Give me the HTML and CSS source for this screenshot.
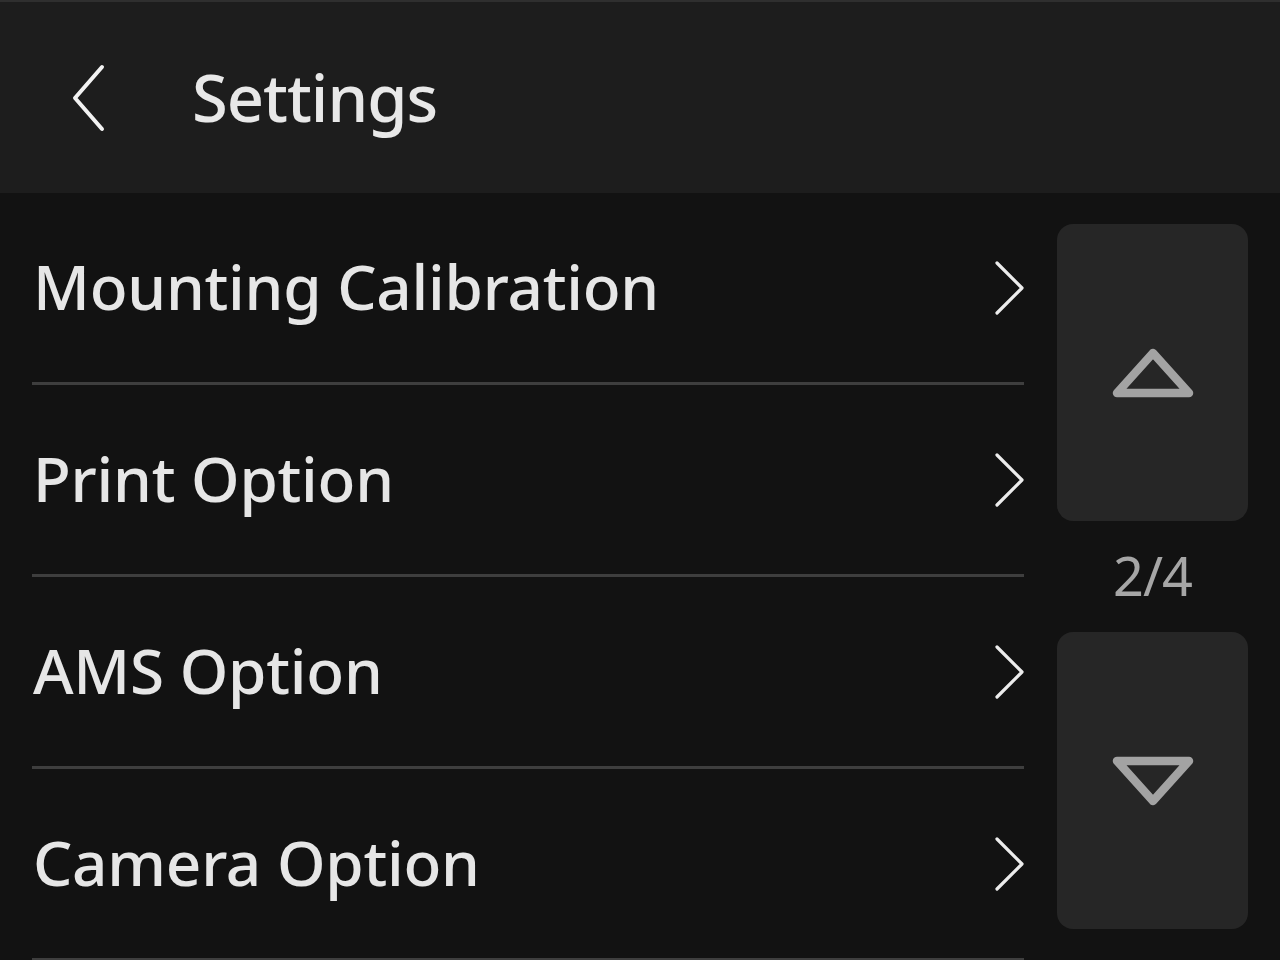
FILE: index.html
```html
<!DOCTYPE html>
<html lang="en">
<head>
<meta charset="utf-8">
<title>Settings</title>
<link rel="stylesheet" href="styles.css">
</head>
<body>
<div class="screen">
  <header class="header">
    <button class="back" aria-label="Back">
      <svg width="36" height="68" viewBox="0 0 36 68"><path d="M32 3 L5 34 L32 65" fill="none" stroke="#f2f2f2" stroke-width="4" stroke-linecap="round" stroke-linejoin="round"/></svg>
    </button>
    <h1 class="title">Settings</h1>
  </header>
  <main class="main">
    <ul class="list">
      <li class="row"><span class="label">Mounting Calibration</span><svg class="chev" width="32" height="56" viewBox="0 0 32 56"><path d="M3 3 L28 28 L3 53" fill="none" stroke="#ececec" stroke-width="3.2" stroke-linecap="round" stroke-linejoin="round"/></svg></li>
      <li class="row"><span class="label">Print Option</span><svg class="chev" width="32" height="56" viewBox="0 0 32 56"><path d="M3 3 L28 28 L3 53" fill="none" stroke="#ececec" stroke-width="3.2" stroke-linecap="round" stroke-linejoin="round"/></svg></li>
      <li class="row"><span class="label">AMS Option</span><svg class="chev" width="32" height="56" viewBox="0 0 32 56"><path d="M3 3 L28 28 L3 53" fill="none" stroke="#ececec" stroke-width="3.2" stroke-linecap="round" stroke-linejoin="round"/></svg></li>
      <li class="row"><span class="label">Camera Option</span><svg class="chev" width="32" height="56" viewBox="0 0 32 56"><path d="M3 3 L28 28 L3 53" fill="none" stroke="#ececec" stroke-width="3.2" stroke-linecap="round" stroke-linejoin="round"/></svg></li>
    </ul>
    <aside class="pager">
      <button class="page-btn" aria-label="Previous page">
        <svg width="88" height="56" viewBox="0 0 88 56"><path d="M44 8 L8 48 L80 48 Z" fill="none" stroke="#a3a3a3" stroke-width="8.5" stroke-linejoin="round"/></svg>
      </button>
      <div class="page-num">2/4</div>
      <button class="page-btn" aria-label="Next page">
        <svg width="88" height="56" viewBox="0 0 88 56"><path d="M8 8 L80 8 L44 48 Z" fill="none" stroke="#a3a3a3" stroke-width="8.5" stroke-linejoin="round"/></svg>
      </button>
    </aside>
  </main>
</div>
</body>
</html>
```

FILE: styles.css
```css
* { box-sizing: border-box; }
html, body {
  margin: 0;
  padding: 0;
  width: 1280px;
  height: 960px;
  overflow: hidden;
  background: #121212;
  font-family: "Noto Sans", "Open Sans", sans-serif;
}
.screen {
  width: 1280px;
  height: 960px;
  display: flex;
  flex-direction: column;
}
.header {
  height: 193px;
  flex: none;
  background: #1d1d1d;
  border-top: 2px solid #2f2f2f;
  display: flex;
  align-items: center;
  padding-left: 70px;
}
.back {
  background: none;
  border: 0;
  padding: 0;
  width: 36px;
  height: 68px;
  display: flex;
}
.title {
  margin: 0 0 0 86px;
  font-size: 65px;
  font-weight: 500;
  color: #e8e8e8;
  line-height: 1;
  letter-spacing: -1px;
}
.main {
  flex: 1;
  display: flex;
  padding-left: 32px;
  min-height: 0;
}
.list {
  list-style: none;
  margin: 0;
  padding: 0;
  width: 992px;
  flex: none;
}
.row {
  height: 192px;
  border-bottom: 3px solid #3e3e3e;
  display: flex;
  align-items: center;
  justify-content: space-between;
  padding-left: 1px;
  padding-bottom: 4px;
}
.row .chev {
  margin-top: 4px;
}
.label {
  font-size: 62px;
  font-weight: 500;
  color: #e6e6e6;
  line-height: 1;
  letter-spacing: -0.25px;
}
.chev {
  flex: none;
  margin-right: -2px;
}
.pager {
  width: 191px;
  margin-left: 33px;
  padding: 31px 0;
  display: flex;
  flex-direction: column;
}
.page-btn {
  height: 297px;
  flex: none;
  border: 0;
  border-radius: 16px;
  background: #262626;
  display: flex;
  align-items: center;
  justify-content: center;
  padding: 0;
}
.page-num {
  flex: 1;
  display: flex;
  align-items: center;
  justify-content: center;
  font-size: 54px;
  color: #a6a6a6;
  line-height: 1;
  letter-spacing: -1px;
  padding-bottom: 3px;
}
```
